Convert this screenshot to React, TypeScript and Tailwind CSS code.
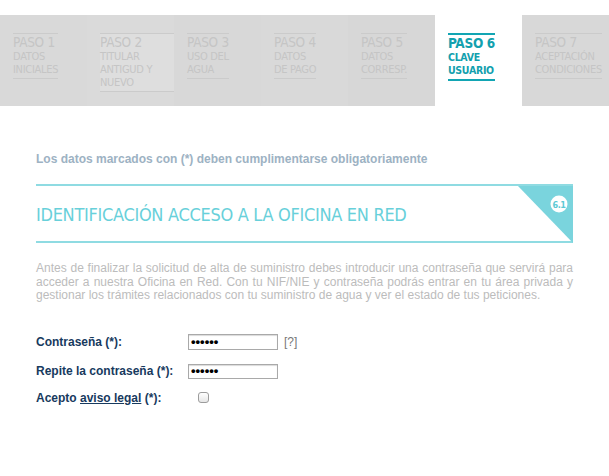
import React from "react";

// Wizard steps shown across the top
const STEPS = [
  { n: "1", lines: ["DATOS", "INICIALES"], bg: "bg-[#d9d9d9]" },
  { n: "2", lines: ["TITULAR", "ANTIGUD Y", "NUEVO"], bg: "bg-[#dadada]", wide: true },
  { n: "3", lines: ["USO DEL", "AGUA"], bg: "bg-[#d8d8d8]" },
  { n: "4", lines: ["DATOS", "DE PAGO"], bg: "bg-[#d9d9d9]" },
  { n: "5", lines: ["DATOS", "CORRESP."], bg: "bg-[#d7d7d7]" },
  { n: "6", lines: ["CLAVE", "USUARIO"], bg: "bg-white", active: true },
  { n: "7", lines: ["ACEPTACIÓN", "CONDICIONES"], bg: "bg-[#d8d8d8]" },
];

const narrow = "font-['DejaVu_Sans_Condensed','Liberation_Sans_Narrow',sans-serif]";

export default function App() {
  return (
    <div className="w-[609px] h-[476px] bg-white overflow-hidden font-['Liberation_Sans',Arial,sans-serif]">
      {/* Steps */}
      <div className="flex mt-[15px] h-[91px]">
        {STEPS.map((s) => (
          <div key={s.n} className={`w-[87px] shrink-0 pl-[13px] pt-[18px] ${s.bg}`}>
            <div
              className={`${narrow} ${s.wide ? "block bg-[#dedede]" : "inline-block"} ${
                s.active
                  ? "border-y-2 border-[#12a5b3] text-[#12a0ae] font-bold"
                  : "border-y border-[#cbcbcb] text-[#c5c5c5]"
              } pt-[1px] pb-[2px] tracking-[-0.3px]`}
            >
              <div className="text-[13.5px] leading-[15px]">PASO {s.n}</div>
              {s.lines.map((l) => (
                <div key={l} className={`${s.active ? "text-[10.5px]" : "text-[11px]"} leading-[13px]`}>
                  {l}
                </div>
              ))}
            </div>
          </div>
        ))}
      </div>

      <div className="px-[36px]">
        <p className="mt-[46px] text-[12px] leading-[14px] font-bold text-[#9db2c3]">
          Los datos marcados con (*) deben cumplimentarse obligatoriamente
        </p>

        {/* Section header */}
        <div className="relative mt-[18px] h-[59px] border-y-2 border-[#8fdbe2]">
          <h2 className={`${narrow} pt-[18px] text-[18px] leading-[21px] tracking-[-0.3px] text-[#68d0da]`}>
            IDENTIFICACIÓN ACCESO A LA OFICINA EN RED
          </h2>
          <svg className="absolute right-0 top-0" width="55" height="57" viewBox="0 0 55 57">
            <polygon points="0,0 55,0 55,57" fill="#7ad4dd" />
            <circle cx="41" cy="18" r="8.5" fill="#ffffff" />
            <text
              x="41"
              y="21.5"
              textAnchor="middle"
              fontSize="9"
              fontWeight="bold"
              letterSpacing="-0.5"
              fill="#5cc9d4"
              fontFamily="'DejaVu Sans Condensed',sans-serif"
            >
              6.1
            </text>
          </svg>
        </div>

        <p className="mt-[19px] text-[12px] leading-[13.5px] text-[#bcbcbc] text-justify">
          Antes de finalizar la solicitud de alta de suministro debes introducir una contraseña que servirá para
          acceder a nuestra Oficina en Red. Con tu NIF/NIE y contraseña podrás entrar en tu área privada y
          gestionar los trámites relacionados con tu suministro de agua y ver el estado de tus peticiones.
        </p>

        {/* Form */}
        <div className="mt-[31px] text-[12px] font-bold text-[#173a5e]">
          <div className="flex items-center h-[16px]">
            <label className="w-[152px]">Contraseña (*):</label>
            <input
              type="password"
              value="123456"
              readOnly
              className="w-[90px] h-[16px] px-[2px] border border-[#a9a9a9] shadow-[inset_0_1px_1px_rgba(0,0,0,0.15)] text-[13px] text-black outline-none"
            />
            <span className="ml-[6px] font-normal text-[#777777]">[?]</span>
          </div>
          <div className="flex items-center h-[15px] mt-[14px]">
            <label className="w-[152px]">Repite la contraseña (*):</label>
            <input
              type="password"
              value="123456"
              readOnly
              className="w-[90px] h-[15px] px-[2px] border border-[#a9a9a9] shadow-[inset_0_1px_1px_rgba(0,0,0,0.15)] text-[13px] text-black outline-none"
            />
          </div>
          <div className="flex items-center h-[12px] mt-[13px]">
            <label className="w-[162px]">
              Acepto <span className="underline">aviso legal</span> (*):
            </label>
            <input
              type="checkbox"
              className="appearance-none w-[11px] h-[11px] rounded-[3px] border border-[#9c9c9c] bg-gradient-to-b from-white to-[#e6e6e6]"
            />
          </div>
        </div>
      </div>
    </div>
  );
}
